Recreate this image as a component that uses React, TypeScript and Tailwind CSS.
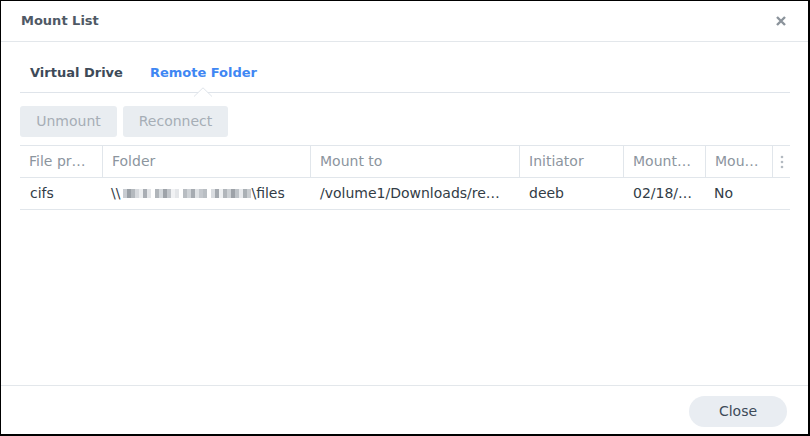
import React from "react";

const font = { fontFamily: '"DejaVu Sans", Verdana, sans-serif' };

const blur: string[] = [
  "#c8ccd1", "#9aa0a6", "#b4b9be", "#d7dade", "#eceef0", "#a9aeb4", "#e3e5e8", "#ffffff",
  "#b0b5ba", "#d4d8dc", "#9ea3a9", "#c2c6cb", "#f1f2f4", "#e4e6e9", "#ffffff",
  "#b8bdc2", "#cfd3d7", "#a6abb1", "#dfe2e5", "#c4c8cd", "#b9bec3", "#ffffff",
  "#d9dce0", "#a4a9af", "#eef0f2", "#b1b6bb", "#cdd1d5", "#9da2a8",
  "#bfc4c9", "#e8eaed", "#aab0b5", "#c9cdd1",
];

export default function App() {
  const headers = ["File pr…", "Folder", "Mount to", "Initiator", "Mount…", "Mou…"];
  const widths = ["w-[83px]", "w-[208px]", "w-[209px]", "w-[104px]", "w-[82px]", "w-[67px]"];
  return (
    <div
      className="w-[810px] h-[436px] bg-white border-l border-t border-r-2 border-b-2 border-black flex flex-col"
      style={font}
    >
      {/* title bar */}
      <div className="h-[41px] border-b border-[#e3e7eb] flex items-center justify-between pl-[20px] pr-[22px] shrink-0">
        <span className="text-[13px] font-bold text-[#4f5965]">Mount List</span>
        <svg width="10" height="10" viewBox="0 0 10 10">
          <path d="M1 1 L9 9 M9 1 L1 9" stroke="#8b939b" strokeWidth="2.4" strokeLinecap="butt" />
        </svg>
      </div>

      <div className="pl-[19px] pr-[18px] flex flex-col">
        {/* tabs */}
        <div className="h-[51px] border-b border-[#dfe4ea] flex items-start pt-[22px] pl-[10px] gap-[27px]">
          <span className="text-[13px] font-bold text-[#3d4a58] leading-[18px]">Virtual Drive</span>
          <span className="relative text-[13px] font-bold text-[#3f87f3] leading-[18px]">
            Remote Folder
            <svg
              width="18"
              height="10"
              viewBox="0 0 18 10"
              className="absolute left-1/2 -translate-x-1/2 top-[23px]"
            >
              <path d="M0 9.5 L9 0.8 L18 9.5" fill="white" stroke="#dfe4ea" strokeWidth="1" />
            </svg>
          </span>
        </div>

        {/* buttons */}
        <div className="flex gap-[6px] mt-[13px]">
          <div className="w-[97px] h-[31px] rounded-[3px] bg-[#e9edf1] text-[#a6aeb6] text-[14px] flex items-center justify-center">
            Unmount
          </div>
          <div className="w-[105px] h-[31px] rounded-[3px] bg-[#e9edf1] text-[#a6aeb6] text-[14px] flex items-center justify-center">
            Reconnect
          </div>
        </div>

        {/* table */}
        <div className="mt-[8px] text-[14px]">
          <div className="flex h-[33px] border-t border-b border-[#e1e6eb]">
            {headers.map((h, i) => (
              <div
                key={i}
                className={`${widths[i]} border-r border-[#e1e6eb] flex items-center pl-[9px] text-[#8c959e] whitespace-nowrap overflow-hidden`}
              >
                {h}
              </div>
            ))}
            <div className="flex-1 flex items-center justify-center">
              <svg width="4" height="14" viewBox="0 0 4 14">
                <circle cx="2" cy="2" r="1.3" fill="#b3bac1" />
                <circle cx="2" cy="7" r="1.3" fill="#b3bac1" />
                <circle cx="2" cy="12" r="1.3" fill="#b3bac1" />
              </svg>
            </div>
          </div>
          <div className="flex h-[32px] border-b border-[#e1e6eb] text-[#323c46]">
            <div className="w-[83px] flex items-center pl-[10px]">cifs</div>
            <div className="w-[208px] flex items-center pl-[8px] whitespace-nowrap">
              <span>\\</span>
              <span className="flex h-[9px] ml-[3px]">
                {blur.map((c, i) => (
                  <span key={i} className="h-full w-[4px]" style={{ background: c }} />
                ))}
              </span>
              <span>\files</span>
            </div>
            <div className="w-[209px] flex items-center pl-[9px] whitespace-nowrap">/volume1/Downloads/re…</div>
            <div className="w-[104px] flex items-center pl-[9px]">deeb</div>
            <div className="w-[82px] flex items-center pl-[9px] whitespace-nowrap">02/18/…</div>
            <div className="w-[67px] flex items-center pl-[8px]">No</div>
            <div className="flex-1" />
          </div>
        </div>
      </div>

      <div className="flex-1" />

      {/* footer */}
      <div className="h-[49px] border-t border-[#e3e7eb] flex justify-end pt-[10px] pr-[21px] shrink-0">
        <div className="w-[98px] h-[31px] rounded-full bg-[#e9edf2] text-[#3d4a58] text-[14px] flex items-center justify-center">
          Close
        </div>
      </div>
    </div>
  );
}
